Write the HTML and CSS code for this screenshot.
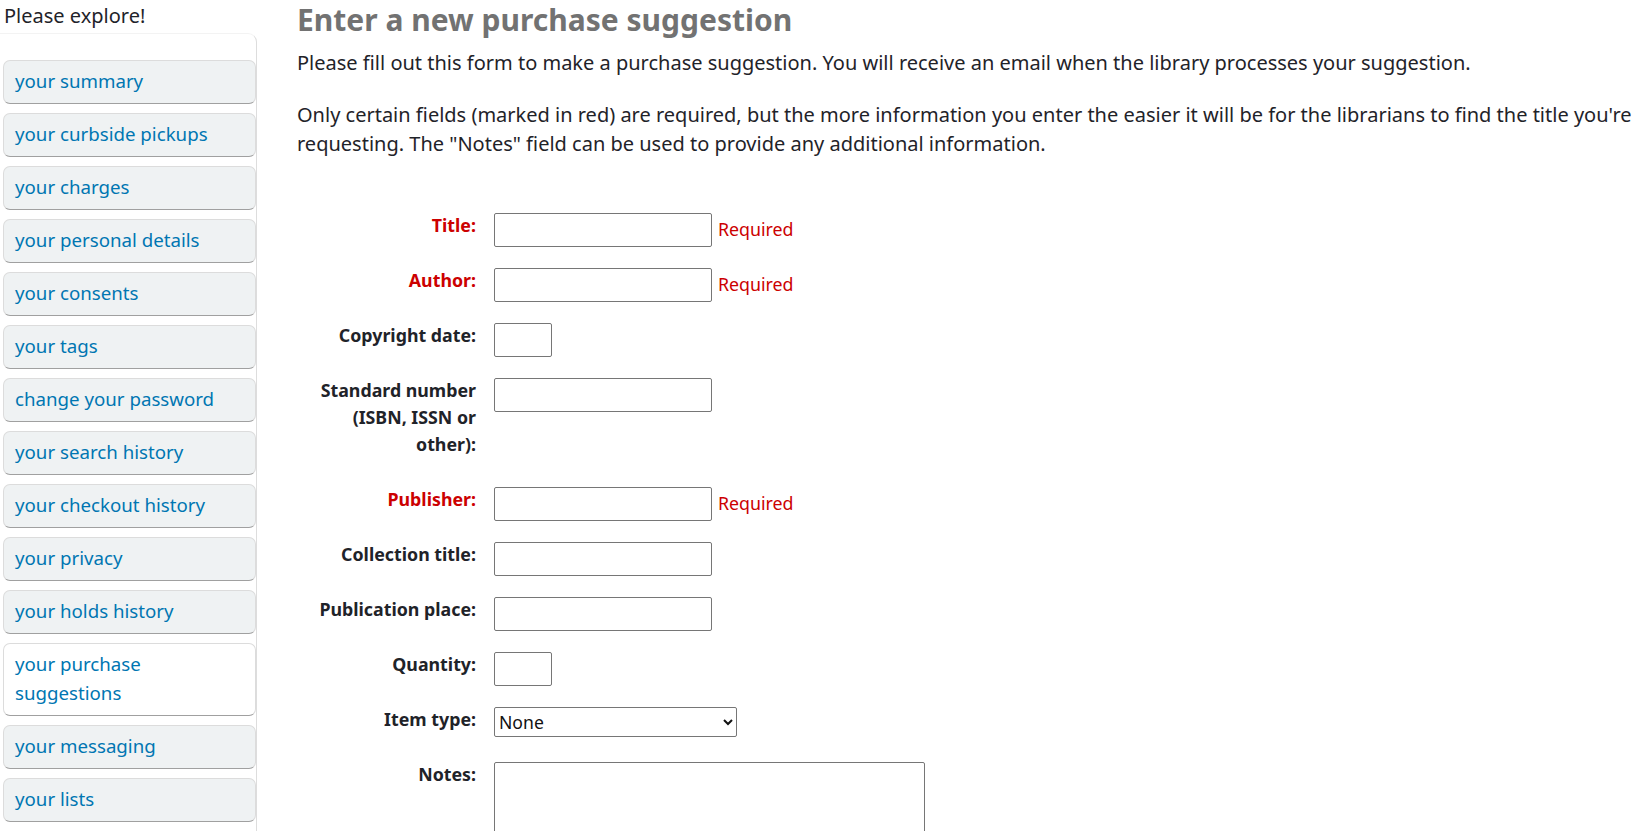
FILE: index.html
```html
<!DOCTYPE html>
<html lang="en">
<head>
    <meta charset="UTF-8">
    <title>Purchase suggestions</title>
    <link rel="stylesheet" href="styles.css">
</head>
<body>
    <div class="page">
        <!-- Menu del usuario -->
        <div class="sidebar">
            <div class="explore">Please explore!</div>
            <ul class="usermenu">
                <li><a href="#">your summary</a></li>
                <li><a href="#">your curbside pickups</a></li>
                <li><a href="#">your charges</a></li>
                <li><a href="#">your personal details</a></li>
                <li><a href="#">your consents</a></li>
                <li><a href="#">your tags</a></li>
                <li><a href="#">change your password</a></li>
                <li><a href="#">your search history</a></li>
                <li><a href="#">your checkout history</a></li>
                <li><a href="#">your privacy</a></li>
                <li><a href="#">your holds history</a></li>
                <li class="active"><a href="#">your purchase suggestions</a></li>
                <li><a href="#">your messaging</a></li>
                <li><a href="#">your lists</a></li>
                <li><a href="#">your alerts</a></li>
            </ul>
        </div>

        <!-- Formulario -->
        <div class="main">
            <h1>Enter a new purchase suggestion</h1>
            <p>Please fill out this form to make a purchase suggestion. You will receive an email when the library processes your suggestion.</p>
            <p>Only certain fields (marked in red) are required, but the more information you enter the easier it will be for the librarians to find the title you're requesting. The "Notes" field can be used to provide any additional information.</p>

            <form class="rows">
                <ol>
                    <li>
                        <label for="title" class="required">Title:</label>
                        <input type="text" id="title" class="wide">
                        <span class="required">Required</span>
                    </li>
                    <li>
                        <label for="author" class="required">Author:</label>
                        <input type="text" id="author" class="wide">
                        <span class="required">Required</span>
                    </li>
                    <li>
                        <label for="copyrightdate">Copyright date:</label>
                        <input type="text" id="copyrightdate" class="short">
                    </li>
                    <li>
                        <label for="isbn">Standard number (ISBN, ISSN or other):</label>
                        <input type="text" id="isbn" class="wide">
                    </li>
                    <li>
                        <label for="publisher" class="required">Publisher:</label>
                        <input type="text" id="publisher" class="wide">
                        <span class="required">Required</span>
                    </li>
                    <li>
                        <label for="collection">Collection title:</label>
                        <input type="text" id="collection" class="wide">
                    </li>
                    <li>
                        <label for="place">Publication place:</label>
                        <input type="text" id="place" class="wide">
                    </li>
                    <li>
                        <label for="quantity">Quantity:</label>
                        <input type="text" id="quantity" class="short">
                    </li>
                    <li>
                        <label for="itemtype">Item type:</label>
                        <select id="itemtype">
                            <option>None</option>
                        </select>
                    </li>
                    <li>
                        <label for="notes">Notes:</label>
                        <textarea id="notes"></textarea>
                    </li>
                </ol>
            </form>
        </div>
    </div>
</body>
</html>
```

FILE: styles.css
```css
html, body {
    overflow: hidden;
}
body {
    margin: 0;
    font-family: "Noto Sans", sans-serif;
    font-size: 20px;
    color: #1f2329;
}
.page {
    display: flex;
    align-items: flex-start;
}
.sidebar {
    flex: none;
    width: 257px;
}
.explore {
    padding: 2px 0 0 4px;
    line-height: 28px;
}
.usermenu {
    list-style: none;
    margin: 3px 0 0;
    padding: 26px 0 0 3px;
    border-right: 1px solid #ddd;
    border-top: 1px solid #f3f3f3;
    border-top-right-radius: 9px;
    font-size: 18.7px;
}
.usermenu li {
    margin-bottom: 9px;
    padding: 5px 11px 8px;
    line-height: 29px;
    background-color: #eff2f3;
    border: 1px solid #dcdcdc;
    border-bottom-color: #a0a0a0;
    border-radius: 7px;
}
.usermenu li.active {
    background-color: #fff;
}
.usermenu a {
    color: #0076b2;
    text-decoration: none;
}
.main {
    flex: none;
    width: 1380px;
    padding-left: 40px;
}
h1 {
    margin: 2px 0 10px;
    font-size: 30px;
    line-height: 36px;
    color: #727272;
}
p {
    margin: 0 0 23px;
    line-height: 29px;
}
form.rows ol {
    list-style: none;
    margin: 55px 0 0;
    padding: 0;
}
form.rows li {
    display: flex;
    align-items: flex-start;
    margin-bottom: 21px;
}
form.rows label {
    flex: none;
    width: 165px;
    margin: -1px 18px 0 14px;
    padding-bottom: 8px;
    text-align: right;
    font-weight: bold;
    font-size: 17.8px;
    line-height: 27px;
}
label.required {
    color: #c00;
}
span.required {
    color: #c00;
    font-size: 17.8px;
    margin: 4px 0 0 6px;
}
input, select, textarea {
    box-sizing: border-box;
    margin: 0;
    border: 1px solid #767676;
    border-radius: 2px;
    font-family: "Noto Sans", sans-serif;
}
input.wide {
    width: 218px;
    height: 34px;
}
input.short {
    width: 58px;
    height: 34px;
}
select {
    width: 243px;
    height: 30px;
    font-size: 17.6px;
    background-color: #fff;
    color: #111;
}
textarea {
    width: 431px;
    height: 120px;
}
```
